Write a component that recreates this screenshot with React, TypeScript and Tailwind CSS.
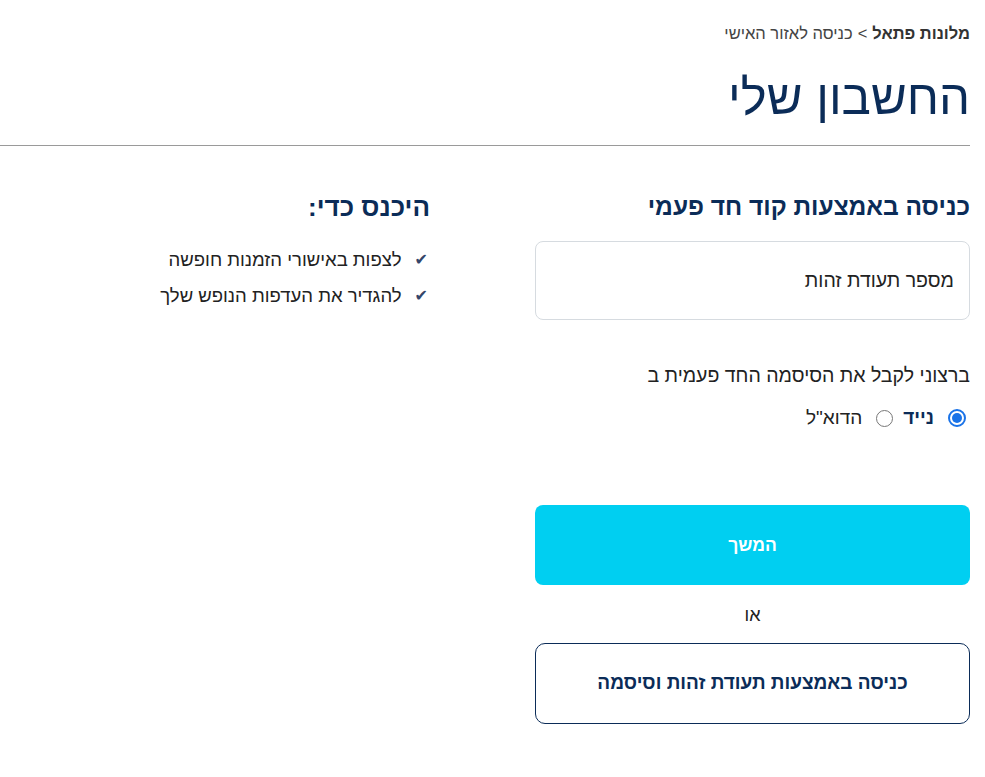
export default function App() {
  const perks = ["לצפות באישורי הזמנות חופשה", "להגדיר את העדפות הנופש שלך"];

  return (
    <div className="min-h-screen bg-white font-['Liberation_Sans',Arial,sans-serif] text-[#222]">
      <div dir="rtl" className="w-[970px]">
        <div className="pt-[22px] text-[16.5px] leading-[22px] text-[#444]">
          <span className="font-bold text-[#333]">מלונות פתאל</span>
          <span className="mx-[5px]">&gt;</span>
          <span>כניסה לאזור האישי</span>
        </div>
        <h1 className="mt-[25px] text-[49px] leading-[56px] text-[#0b2c58]">החשבון שלי</h1>
        <div className="mt-[20px] h-px bg-[#9a9a9a]" />

        <div className="flex gap-[105px] pt-[46px]">
          <section className="w-[435px]">
            <h2 className="text-[24.5px] font-bold leading-[30px] text-[#0b2c58]">כניסה באמצעות קוד חד פעמי</h2>
            <div className="mt-[19px] flex h-[79px] items-center rounded-[8px] border border-[#d6dbe0] pr-[15px] text-[19.5px] text-[#222]">
              מספר תעודת זהות
            </div>
            <p className="mt-[41px] text-[19.5px] leading-[28px] text-[#222]">ברצוני לקבל את הסיסמה החד פעמית ב</p>
            <div className="mt-[17px] flex h-[24px] items-center pr-[4px] text-[19px]">
              <span className="flex h-[18px] w-[18px] items-center justify-center rounded-full border-2 border-[#1a73e8]">
                <span className="h-[10px] w-[10px] rounded-full bg-[#1a73e8]" />
              </span>
              <span className="mr-[14px] font-bold text-[#0b2c58]">נייד</span>
              <span className="mr-[10px] h-[17px] w-[17px] rounded-full border border-[#777]" />
              <span className="mr-[14px] text-[#222]">הדוא"ל</span>
            </div>
            <button className="mt-[75px] flex h-[80px] w-full items-center justify-center rounded-[8px] bg-[#00cff1] text-[17.5px] font-bold text-white">
              המשך
            </button>
            <div className="mt-[18px] text-center text-[18px] leading-[24px] text-[#222]">או</div>
            <button className="mt-[16px] flex h-[81px] w-full items-center justify-center rounded-[10px] border border-[#0b2c58] text-[19px] font-bold text-[#0b2c58]">
              כניסה באמצעות תעודת זהות וסיסמה
            </button>
          </section>

          <section className="w-[430px]">
            <h2 className="text-[26px] font-bold leading-[30px] text-[#0b2c58]">היכנס כדי:</h2>
            <ul className="mt-[25px] space-y-[10px] pr-[2px]">
              {perks.map((p) => (
                <li key={p} className="flex items-center gap-[13px] text-[18.5px] leading-[26px] text-[#222]">
                  <span className="font-['DejaVu_Sans',sans-serif] text-[16px] leading-[16px] text-[#34466a]">✔</span>
                  {p}
                </li>
              ))}
            </ul>
          </section>
        </div>
      </div>
    </div>
  );
}
